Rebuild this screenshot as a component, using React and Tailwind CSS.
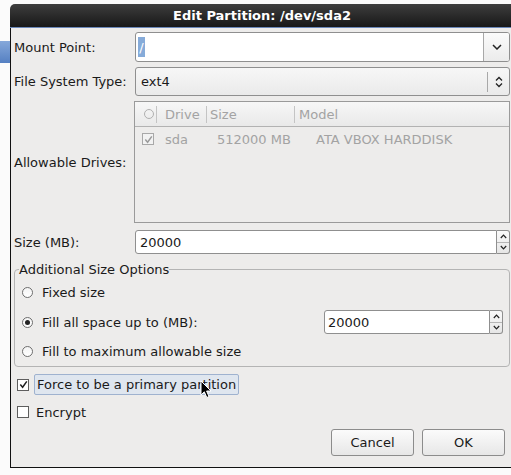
const SpinButtons = ({ h }) => (
  <div className={`w-[13px] flex flex-col border border-l-0 border-[#8f8f8f] rounded-r-[3px] bg-gradient-to-b from-[#fafafa] to-[#e6e6e6] ${h}`}>
    <div className="flex-1 flex items-center justify-center border-b border-[#b5b5b5]">
      <svg width="7" height="5" viewBox="0 0 7 5"><path d="M0.8 4 L3.5 1.2 L6.2 4" fill="none" stroke="#222" strokeWidth="1.2" /></svg>
    </div>
    <div className="flex-1 flex items-center justify-center">
      <svg width="7" height="5" viewBox="0 0 7 5"><path d="M0.8 1 L3.5 3.8 L6.2 1" fill="none" stroke="#222" strokeWidth="1.2" /></svg>
    </div>
  </div>
);

const Radio = ({ checked }) => (
  <span className="w-[11px] h-[11px] rounded-full border border-[#6e6e6e] bg-gradient-to-b from-[#f4f4f4] to-[#ffffff] flex items-center justify-center shrink-0">
    {checked && <span className="w-[5px] h-[5px] rounded-full bg-[#222]" />}
  </span>
);

const Check = ({ checked, disabled }) => (
  <span className={`w-[12px] h-[12px] border ${disabled ? "border-[#a8a8a8] bg-[#f2f2f2]" : "border-[#5e5e5e] bg-white"} flex items-center justify-center shrink-0`}>
    {checked && (
      <svg width="9" height="9" viewBox="0 0 9 9">
        <path d="M1.3 4.6 L3.6 7.2 L7.8 1.4" fill="none" stroke={disabled ? "#9a9a9a" : "#1e1e1e"} strokeWidth="1.5" />
      </svg>
    )}
  </span>
);

export default function App() {
  return (
    <div className="w-[511px] h-[475px] overflow-hidden bg-[#fbfbfb] flex items-start font-['DejaVu_Sans',sans-serif] text-[13px] text-[#1a1a1a] leading-[15px]">
      <div className="w-[10px] shrink-0 pt-[41px]">
        <div className="h-[22px] bg-gradient-to-b from-[#86a8da] to-[#5580c2]" />
      </div>
      <div className="mt-[4px] w-[504px] shrink-0 h-[464px] flex flex-col">
        <div className="h-[23px] shrink-0 rounded-tl-[5px] bg-gradient-to-b from-[#3e3e3e] to-[#181818] flex items-center justify-center text-white font-bold">
          Edit Partition: /dev/sda2
        </div>
        <div className="h-[1px] shrink-0 bg-[#6a87b8]" />
        <div className="flex-1 bg-[#edeceb] border-l border-b border-[#111] pl-[3px] pr-[5px] pt-[4px] flex flex-col">
          <div className="grid grid-cols-[121px_1fr]">
            <div className="h-[30px] flex items-center">Mount Point:</div>
            <div className="h-[30px] flex rounded-[3px] border border-[#8f8f8f] bg-white overflow-hidden">
              <div className="flex-1 flex items-center pl-[2px]">
                <span className="bg-[#86abd9] text-white h-[20px] w-[7px] flex items-center justify-center">/</span>
              </div>
              <div className="w-[26px] border-l border-[#a8a8a8] bg-gradient-to-b from-[#fbfbfb] to-[#ebebeb] flex items-center justify-center">
                <svg width="10" height="6" viewBox="0 0 10 6"><path d="M1 1 L5 5 L9 1" fill="none" stroke="#222" strokeWidth="1.5" /></svg>
              </div>
            </div>

            <div className="h-[29px] mt-[5px] flex items-center">File System Type:</div>
            <div className="h-[29px] mt-[5px] flex items-center rounded-[3px] border border-[#8f8f8f] bg-gradient-to-b from-[#f7f7f7] to-[#eaeaea]">
              <span className="flex-1 pl-[5px]">ext4</span>
              <div className="w-[1px] h-[20px] bg-[#a8a8a8]" />
              <div className="w-[21px] flex items-center justify-center">
                <svg width="8" height="12" viewBox="0 0 8 12">
                  <path d="M1 4.5 L4 1.5 L7 4.5" fill="none" stroke="#222" strokeWidth="1.3" />
                  <path d="M1 7.5 L4 10.5 L7 7.5" fill="none" stroke="#222" strokeWidth="1.3" />
                </svg>
              </div>
            </div>

            <div className="h-[122px] mt-[5px] flex items-center">Allowable Drives:</div>
            <div className="h-[122px] mt-[5px] -ml-[1px] w-[376px] border border-[#9a9a9a] bg-[#edeceb] flex flex-col text-[#a3a3a3]">
              <div className="h-[25px] shrink-0 flex items-center border-b border-[#b2b2b2] bg-gradient-to-b from-[#f7f7f7] to-[#e9e9e9]">
                <div className="w-[20px] flex items-center justify-end pr-[1px]">
                  <span className="w-[10px] h-[10px] rounded-full border border-[#b0b0b0]" />
                </div>
                <div className="w-[1px] h-[17px] bg-[#c4c4c4] ml-[1px]" />
                <div className="w-[49px] pl-[8px]">Drive</div>
                <div className="w-[1px] h-[17px] bg-[#c4c4c4]" />
                <div className="w-[87px] pl-[3px]">Size</div>
                <div className="w-[1px] h-[17px] bg-[#c4c4c4]" />
                <div className="pl-[4px]">Model</div>
              </div>
              <div className="h-[24px] flex items-center">
                <div className="w-[19px] flex justify-end">
                  <Check checked disabled />
                </div>
                <div className="w-[63px] pl-[11px]">sda</div>
                <div className="w-[99px]">512000 MB</div>
                <div>ATA VBOX HARDDISK</div>
              </div>
            </div>

            <div className="h-[24px] mt-[7px] flex items-center">Size (MB):</div>
            <div className="h-[24px] mt-[7px] flex">
              <div className="flex-1 border border-[#8f8f8f] rounded-l-[3px] bg-white flex items-center pl-[4px]">20000</div>
              <SpinButtons h="h-[24px]" />
            </div>
          </div>

          <fieldset className="mt-[8px] w-[496px] border border-[#b4b4b4] rounded-[4px] p-0 m-0">
            <legend className="ml-[4px] px-0 leading-[15px]">Additional Size Options</legend>
            <div className="pt-[3px] pb-[3px] pl-[7px] pr-[6px] flex flex-col">
              <div className="h-[24px] flex items-center gap-[9px]">
                <Radio />
                <span>Fixed size</span>
              </div>
              <div className="h-[24px] mt-[6px] flex items-center">
                <Radio checked />
                <span className="ml-[9px] flex-1">Fill all space up to (MB):</span>
                <div className="w-[179px] h-[24px] flex">
                  <div className="flex-1 border border-[#8f8f8f] rounded-l-[3px] bg-white flex items-center pl-[3px]">20000</div>
                  <SpinButtons h="h-[24px]" />
                </div>
              </div>
              <div className="h-[24px] mt-[5px] flex items-center gap-[9px]">
                <Radio />
                <span>Fill to maximum allowable size</span>
              </div>
            </div>
          </fieldset>

          <div className="mt-[7px] h-[21px] flex items-center pl-[3px]">
            <Check checked />
            <div className="relative ml-[5px] h-[21px] px-[2px] flex items-center rounded-[2px] border border-[#9fb2cf] bg-[#dfe6ef]">
              Force to be a primary partition
              <svg className="absolute left-[165px] top-[5px]" width="13" height="19" viewBox="0 0 13 19">
                <path d="M1 1 L1 15 L4.3 11.8 L6.8 17.5 L9 16.5 L6.6 11 L11 11 Z" fill="#000" stroke="#fff" strokeWidth="1" strokeLinejoin="round" />
              </svg>
            </div>
          </div>
          <div className="mt-[7px] h-[20px] flex items-center pl-[3px]">
            <Check />
            <span className="ml-[7px]">Encrypt</span>
          </div>

          <div className="mt-[7px] flex justify-end gap-[8px] pr-[4px]">
            <button className="w-[83px] h-[27px] rounded-[3px] border border-[#8c8c8c] bg-gradient-to-b from-[#fbfbfb] to-[#e7e7e7] flex items-center justify-center">Cancel</button>
            <button className="w-[83px] h-[27px] rounded-[3px] border border-[#8c8c8c] bg-gradient-to-b from-[#fbfbfb] to-[#e7e7e7] flex items-center justify-center">OK</button>
          </div>
        </div>
      </div>
    </div>
  );
}
